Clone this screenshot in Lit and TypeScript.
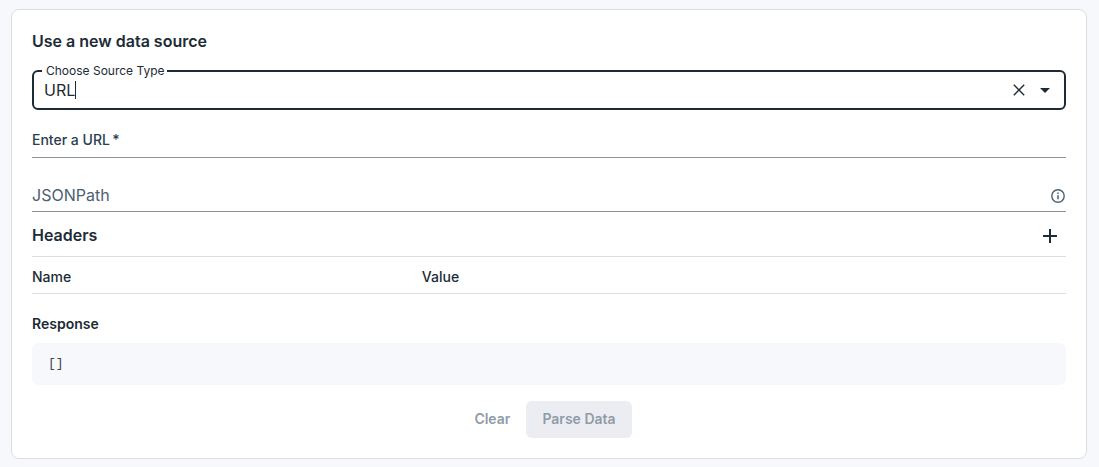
import { LitElement, html, css } from 'lit';
import { customElement, state } from 'lit/decorators.js';

@customElement('app-root')
export class AppRoot extends LitElement {
  static styles = css`
    :host {
      --ink: #1c2b36;
      --muted: #4c6072;
      --divider: #dcdde3;
      --surface: #f7f8fc;
      display: block;
      box-sizing: border-box;
      min-height: 100vh;
      padding: 9px 12px 8px 11px;
      background: var(--surface);
      color: var(--ink);
      font: 400 16px/24px Inter, sans-serif;
    }
    * { box-sizing: border-box; }
    .card {
      padding: 19px 20px 20px;
      background: #fff;
      border: 1px solid var(--divider);
      border-radius: 8px;
    }
    h2, h3 { margin: 0; font-size: 16px; line-height: 24px; font-weight: 600; }
    button, input { font: inherit; color: inherit; border: 0; background: none; padding: 0; margin: 0; }
    button { display: flex; align-items: center; justify-content: center; }
    input { outline: none; min-width: 0; }
    svg { display: block; fill: none; stroke: currentColor; }

    .select {
      min-width: 0;
      margin: 10px 0 0;
      padding: 0 7px 7px 8px;
      border: 2px solid var(--ink);
      border-radius: 6px;
    }
    .select legend { padding: 0 2px 0 4px; font-size: 12px; line-height: 16px; }
    .select label { display: block; }
    .combo { display: flex; align-items: center; height: 22px; padding-left: 2px; }
    .combo input { field-sizing: content; height: 22px; caret-color: transparent; }
    .caret { width: 1px; height: 18px; background: var(--ink); }
    .actions { display: flex; gap: 2px; margin-left: auto; }
    .actions button { width: 24px; height: 22px; }

    .field { display: flex; align-items: center; border-bottom: 1px solid #8f9193; }
    .field input { flex: 1; height: 20px; padding-left: 8px; }
    .url { margin-top: 20px; padding-bottom: 7px; font-size: 14px; line-height: 20px; font-weight: 500; color: #2b3e4f; }
    .path { margin-top: 26px; padding-bottom: 3px; color: var(--muted); }
    .path label { padding-bottom: 2px; line-height: 22px; }

    .headers {
      display: flex;
      align-items: center;
      justify-content: space-between;
      padding-top: 4px;
      border-bottom: 1px solid var(--divider);
    }
    .headers h3 { padding-bottom: 2px; }
    .add { width: 32px; height: 40px; }
    table { width: 100%; border-collapse: separate; border-spacing: 0; table-layout: fixed; }
    th {
      padding: 10px 0 6px;
      border-bottom: 1px solid var(--divider);
      text-align: left;
      font-size: 14px;
      line-height: 20px;
      font-weight: 500;
    }
    .name { width: 37.7%; }
    .response { margin-top: 20px; font-size: 14px; line-height: 20px; }
    pre {
      margin: 9px 0 0;
      padding: 12px 16px;
      border-radius: 6px;
      background: var(--surface);
      color: #3f464d;
      font: 13px/18px "Liberation Mono", monospace;
    }
    .buttons { display: flex; justify-content: center; gap: 8px; margin-top: 16px; }
    .buttons button {
      padding: 7px 8px 9px;
      border-radius: 6px;
      font-size: 14px;
      line-height: 21px;
      font-weight: 600;
      color: #8f9ca7;
    }
    .buttons .primary { padding: 7px 16px 9px; background: #ecedf3; }
  `;

  @state() private source = 'URL';

  render() {
    return html`
      <main class="card">
        <h2>Use a new data source</h2>
        <fieldset class="select">
          <legend><label for="source">Choose Source Type</label></legend>
          <div class="combo">
            <input id="source" role="combobox" aria-expanded="false" autocomplete="off" .value=${this.source}
              @input=${(e: Event) => (this.source = (e.target as HTMLInputElement).value)} />
            <span class="caret"></span>
            <div class="actions">
              <button type="button" aria-label="Clear source" @click=${() => (this.source = '')}>
                <svg width="12" height="12" viewBox="0 0 12 12" stroke-width="1.4"><path d="M.8.8l10.4 10.4M11.2.8L.8 11.2" /></svg>
              </button>
              <button type="button" aria-label="Open">
                <svg width="10" height="5" viewBox="0 0 10 5"><path d="M0 0h10L5 5z" fill="currentColor" stroke="none" /></svg>
              </button>
            </div>
          </div>
        </fieldset>

        <div class="field url">
          <label for="url">Enter a URL&thinsp;*</label>
          <input id="url" type="url" required />
        </div>
        <div class="field path">
          <label for="path">JSONPath</label>
          <input id="path" type="text" />
          <button type="button" aria-label="About JSONPath">
            <svg width="16" height="16" viewBox="0 0 16 16" stroke-width="1.4">
              <circle cx="8" cy="8" r="6.2" />
              <path d="M8 7.2v4M8 4.6v1.4" stroke-width="1.5" />
            </svg>
          </button>
        </div>

        <div class="headers">
          <h3>Headers</h3>
          <button class="add" type="button" aria-label="Add header">
            <svg width="14" height="14" viewBox="0 0 14 14" stroke-width="2"><path d="M7 0v14M0 7h14" /></svg>
          </button>
        </div>
        <table>
          <thead><tr><th class="name" scope="col">Name</th><th scope="col">Value</th></tr></thead>
        </table>

        <h3 class="response">Response</h3>
        <pre>[]</pre>
        <div class="buttons">
          <button type="button" disabled>Clear</button>
          <button type="button" class="primary" disabled>Parse Data</button>
        </div>
      </main>
    `;
  }
}
